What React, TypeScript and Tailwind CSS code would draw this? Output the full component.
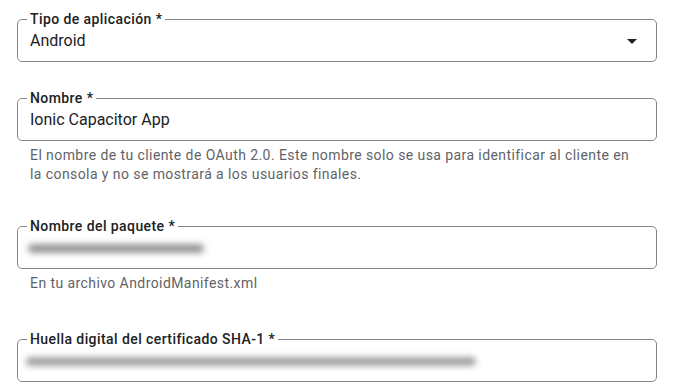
import React from "react";

const font = { fontFamily: "Roboto, 'Noto Sans', Arial, sans-serif" };

function Field({
  label,
  children,
  className = "",
}: {
  label: string;
  children: React.ReactNode;
  className?: string;
}) {
  return (
    <fieldset
      className={`m-0 p-0 border border-[#80868b] rounded-[5px] min-w-0 ${className}`}
    >
      <legend className="ml-[9px] px-[3px] text-[14px] leading-[20px] font-medium tracking-[0.42px] text-[#202124]">
        {label}
      </legend>
      <div className="px-[12px] pb-[8px] h-[32px] flex items-start">{children}</div>
    </fieldset>
  );
}

export default function App() {
  return (
    <div className="w-[674px] h-[390px] bg-white overflow-hidden" style={font}>
      <div className="pl-[17px] pr-[17px] pt-[9px] w-[674px]">
        <Field label="Tipo de aplicación *">
          <div className="flex-1 flex items-center h-[24px]">
            <span className="text-[16px] leading-[24px] text-[#202124]">Android</span>
            <svg
              className="ml-auto mr-[7px]"
              width="10"
              height="5"
              viewBox="0 0 10 5"
            >
              <path d="M0 0 L10 0 L5 5 Z" fill="#202124" />
            </svg>
          </div>
        </Field>

        <Field label="Nombre *" className="mt-[26px]">
          <span className="text-[16px] leading-[24px] text-[#202124]">Ionic Capacitor App</span>
        </Field>
        <p className="mt-[5px] pl-[13px] pr-[14px] text-[14px] leading-[19px] tracking-[0.42px] text-[#5f6368]">
          El nombre de tu cliente de OAuth 2.0. Este nombre solo se usa para identificar al cliente en
          la consola y no se mostrará a los usuarios finales.
        </p>

        <Field label="Nombre del paquete *" className="mt-[32px]">
          <div className="h-[24px] flex items-center">
            <div className="ml-[-2px] w-[176px] h-[9px] rounded-full bg-[#959595] blur-[3px]" />
          </div>
        </Field>
        <p className="mt-[4px] px-[13px] text-[14px] leading-[20px] tracking-[0.42px] text-[#5f6368]">
          En tu archivo AndroidManifest.xml
        </p>

        <Field label="Huella digital del certificado SHA-1 *" className="mt-[36px]">
          <div className="h-[24px] flex items-center">
            <div className="ml-[-4px] w-[450px] h-[9px] rounded-full bg-[#a0a0a0] blur-[3px]" />
          </div>
        </Field>
      </div>
    </div>
  );
}
